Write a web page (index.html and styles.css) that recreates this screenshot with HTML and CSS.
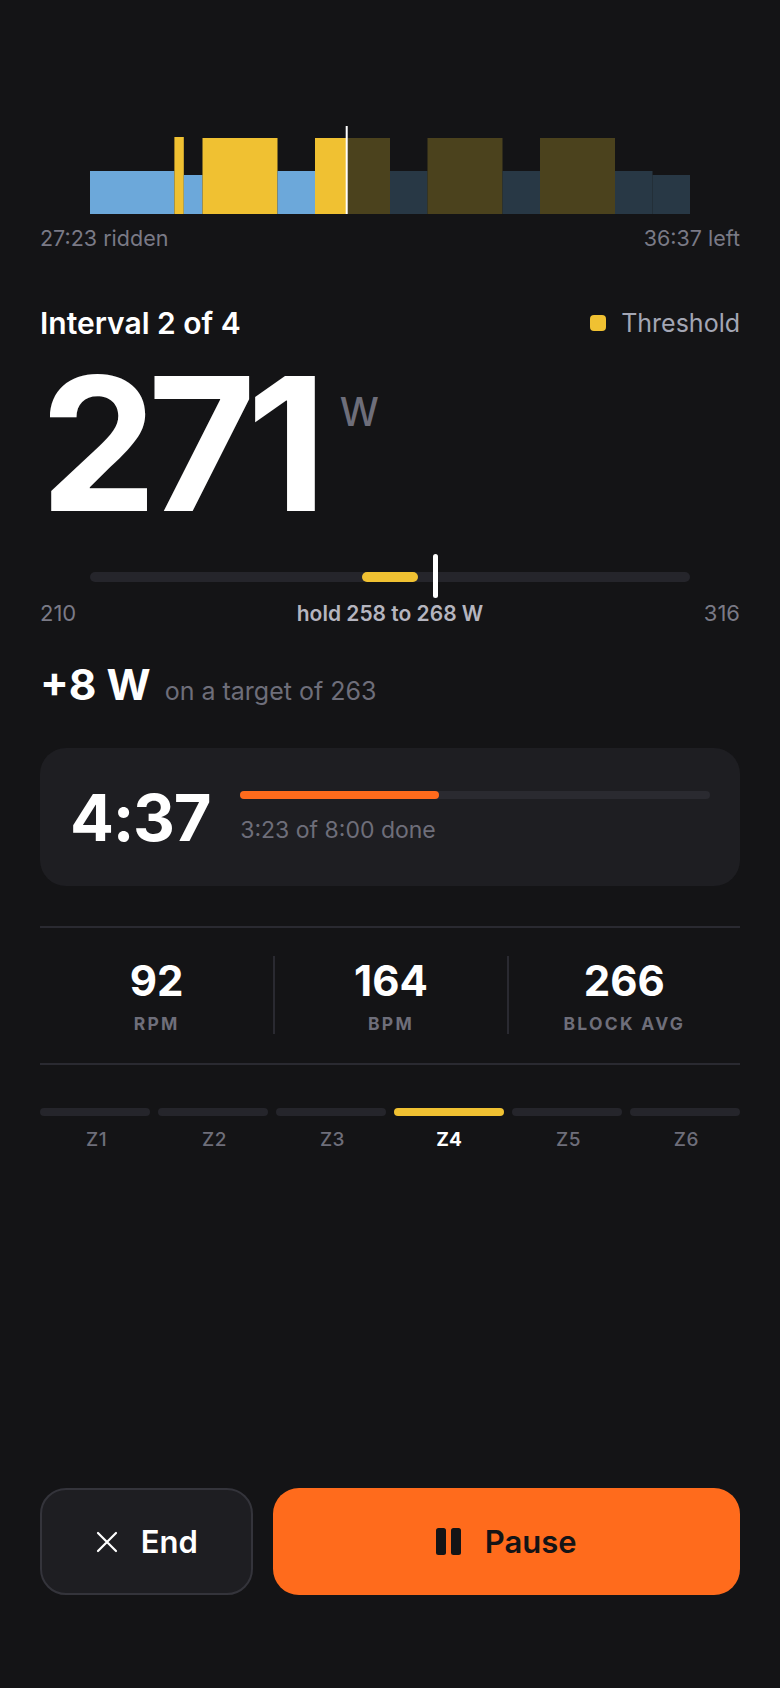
FILE: index.html
```html
<!DOCTYPE html>
<html lang="en">
<head>
    <meta charset="UTF-8">
    <meta name="viewport" content="width=device-width, initial-scale=1.0">
    <title>Ride - Interval 2 of 4</title>
    <link rel="stylesheet" href="styles.css">
</head>
<body>

    <main class="ride">

        <!-- Workout profile -->
        <section class="profile">
            <svg class="profile-chart" viewBox="0 0 600 88" width="600" height="88">
                <!-- ridden -->
                <rect x="0" y="45" width="84.4" height="43" fill="#6ca8da"/>
                <rect x="84.4" y="11" width="9.4" height="77" fill="#f0c132"/>
                <rect x="93.8" y="49" width="18.7" height="39" fill="#6ca8da"/>
                <rect x="112.5" y="12" width="75" height="76" fill="#f0c132"/>
                <rect x="187.5" y="45" width="37.5" height="43" fill="#6ca8da"/>
                <rect x="225" y="12" width="31.7" height="76" fill="#f0c132"/>
                <!-- to come -->
                <rect x="256.7" y="12" width="43.3" height="76" fill="#4b421d"/>
                <rect x="300" y="45" width="37.5" height="43" fill="#283845"/>
                <rect x="337.5" y="12" width="75" height="76" fill="#4b421d"/>
                <rect x="412.5" y="45" width="37.5" height="43" fill="#283845"/>
                <rect x="450" y="12" width="75" height="76" fill="#4b421d"/>
                <rect x="525" y="45" width="37.5" height="43" fill="#283845"/>
                <rect x="562.5" y="49" width="37.5" height="39" fill="#283845"/>
                <rect x="255.7" y="0" width="2" height="88" fill="#ffffff"/>
            </svg>
            <div class="profile-times">
                <span>27:23 ridden</span>
                <span>36:37 left</span>
            </div>
        </section>

        <!-- Current interval -->
        <section class="interval">
            <div class="interval-head">
                <h1>Interval 2 of 4</h1>
                <span class="zone-tag"><i class="swatch"></i>Threshold</span>
            </div>

            <div class="power">
                <span class="power-value">271</span>
                <span class="power-unit">W</span>
            </div>

            <div class="range">
                <div class="range-track">
                    <div class="range-band" style="left: 45.3%; width: 9.4%;"></div>
                    <div class="range-marker" style="left: 57.5%;"></div>
                </div>
                <div class="range-labels">
                    <span>210</span>
                    <strong>hold 258 to 268 W</strong>
                    <span>316</span>
                </div>
            </div>

            <div class="delta">
                <strong>+8 W</strong>
                <span>on a target of 263</span>
            </div>
        </section>

        <!-- Time left in block -->
        <section class="block-card">
            <div class="block-time">4:37</div>
            <div class="block-progress">
                <div class="progress-track">
                    <div class="progress-fill" style="width: 42.3%;"></div>
                </div>
                <p>3:23 of 8:00 done</p>
            </div>
        </section>

        <!-- Live stats -->
        <section class="stats">
            <div class="stat">
                <div class="stat-value">92</div>
                <div class="stat-label">RPM</div>
            </div>
            <div class="stat">
                <div class="stat-value">164</div>
                <div class="stat-label">BPM</div>
            </div>
            <div class="stat">
                <div class="stat-value">266</div>
                <div class="stat-label">BLOCK AVG</div>
            </div>
        </section>

        <!-- Power zones -->
        <section class="zones">
            <div class="zone"><div class="zone-bar"></div><span>Z1</span></div>
            <div class="zone"><div class="zone-bar"></div><span>Z2</span></div>
            <div class="zone"><div class="zone-bar"></div><span>Z3</span></div>
            <div class="zone active"><div class="zone-bar"></div><span>Z4</span></div>
            <div class="zone"><div class="zone-bar"></div><span>Z5</span></div>
            <div class="zone"><div class="zone-bar"></div><span>Z6</span></div>
        </section>

        <div class="spacer"></div>

        <!-- Controls -->
        <footer class="controls">
            <button class="btn btn-end">
                <svg width="24" height="24" viewBox="0 0 24 24">
                    <path d="M3 3 L21 21 M21 3 L3 21" stroke="#fff" stroke-width="2.2" stroke-linecap="round"/>
                </svg>
                End
            </button>
            <button class="btn btn-pause">
                <svg width="25" height="27" viewBox="0 0 25 27">
                    <rect x="0" y="0" width="10" height="27" rx="2.5" fill="#141416"/>
                    <rect x="15" y="0" width="10" height="27" rx="2.5" fill="#141416"/>
                </svg>
                Pause
            </button>
        </footer>

    </main>

</body>
</html>
```

FILE: styles.css
```css
* {
    margin: 0;
    padding: 0;
    box-sizing: border-box;
}

body {
    font-family: Inter, "Noto Sans", sans-serif;
    background-color: #141416;
    color: #fff;
}

.ride {
    min-height: 100vh;
    display: flex;
    flex-direction: column;
    padding: 126px 40px 93px;
}

/* Profile */
.profile-chart {
    display: block;
    margin: 0 auto;
}

.profile-times {
    display: flex;
    justify-content: space-between;
    margin-top: 12px;
    font-size: 21.5px;
    line-height: 24px;
    color: #7a7a86;
}

/* Interval */
.interval-head {
    display: flex;
    justify-content: space-between;
    align-items: center;
    margin-top: 58px;
    height: 30px;
}

.interval-head h1 {
    font-size: 30px;
    font-weight: 600;
}

.zone-tag {
    display: flex;
    align-items: center;
    gap: 15px;
    font-size: 25px;
    color: #a3a6b4;
}

.swatch {
    width: 16px;
    height: 16px;
    border-radius: 4px;
    background-color: #f0c132;
}

.power {
    display: flex;
    align-items: flex-start;
    margin-top: 13px;
}

.power-value {
    font-size: 186px;
    line-height: 1;
    font-weight: 700;
    letter-spacing: -0.05em;
}

.power-unit {
    font-size: 39px;
    line-height: 1;
    font-weight: 500;
    color: #6e6e7a;
    margin-top: 41px;
    margin-left: 22px;
}

.range {
    margin-top: 35px;
}

.range-track {
    position: relative;
    height: 10px;
    margin: 0 50px;
    border-radius: 5px;
    background-color: #25252b;
}

.range-band {
    position: absolute;
    top: 0;
    height: 10px;
    border-radius: 5px;
    background-color: #f0c132;
}

.range-marker {
    position: absolute;
    top: -18px;
    width: 5px;
    height: 44px;
    margin-left: -2px;
    border-radius: 3px;
    background-color: #fff;
}

.range-labels {
    display: flex;
    justify-content: space-between;
    align-items: baseline;
    margin-top: 19px;
    font-size: 22px;
    line-height: 24px;
    color: #7a7a86;
}

.range-labels strong {
    font-size: 21px;
    font-weight: 600;
    color: #b5b5bf;
}

.delta {
    display: flex;
    align-items: baseline;
    gap: 14px;
    margin-top: 36px;
}

.delta strong {
    font-size: 42.5px;
    line-height: 46px;
    font-weight: 700;
}

.delta span {
    font-size: 25px;
    color: #6e6e7a;
}

/* Block card */
.block-card {
    display: flex;
    align-items: center;
    gap: 30px;
    margin-top: 40px;
    padding: 36.5px 30px;
    border-radius: 26px;
    background-color: #1e1e22;
}

.block-time {
    font-size: 65px;
    line-height: 1;
    font-weight: 700;
    letter-spacing: -0.02em;
}

.block-progress {
    flex: 1;
}

.progress-track {
    height: 8px;
    border-radius: 4px;
    background-color: #2a2a30;
}

.progress-fill {
    height: 8px;
    border-radius: 4px;
    background-color: #ff6b1c;
}

.block-progress p {
    margin-top: 17px;
    font-size: 23px;
    line-height: 28px;
    color: #6e6e7a;
}

/* Stats */
.stats {
    display: grid;
    grid-template-columns: repeat(3, 1fr);
    margin-top: 40px;
    padding: 28px 0 29px;
    border-top: 2px solid #2a2a31;
    border-bottom: 2px solid #2a2a31;
}

.stat {
    text-align: center;
    padding-top: 4px;
}

.stat + .stat {
    border-left: 2px solid #2a2a31;
}

.stat-value {
    font-size: 42px;
    line-height: 1;
    font-weight: 700;
}

.stat-label {
    margin-top: 12px;
    font-size: 17.5px;
    line-height: 20px;
    font-weight: 700;
    letter-spacing: 0.13em;
    color: #6e6e7a;
}

/* Zones */
.zones {
    display: grid;
    grid-template-columns: repeat(6, 1fr);
    gap: 8px;
    margin-top: 43px;
}

.zone {
    text-align: center;
}

.zone-bar {
    height: 8px;
    border-radius: 4px;
    background-color: #25252b;
}

.zone span {
    display: block;
    margin-top: 13px;
    padding-left: 3px;
    font-size: 19px;
    line-height: 22px;
    font-weight: 500;
    letter-spacing: 0.03em;
    color: #6e6e7a;
}

.zone.active .zone-bar {
    background-color: #f0c132;
}

.zone.active span {
    padding-left: 0;
    letter-spacing: 0;
    color: #fff;
    font-weight: 700;
}

.spacer {
    flex: 1;
}

/* Controls */
.controls {
    display: grid;
    grid-template-columns: 1fr 2.2fr;
    gap: 20px;
}

.btn {
    display: flex;
    align-items: center;
    justify-content: center;
    gap: 22px;
    height: 107px;
    border-radius: 26px;
    font-family: Inter, "Noto Sans", sans-serif;
    font-size: 31px;
    font-weight: 600;
    cursor: pointer;
}

.btn-end {
    background-color: #1e1e22;
    border: 2px solid #34343b;
    color: #fff;
}

.btn-pause {
    gap: 24px;
    background-color: #ff6b1c;
    border: none;
    color: #141416;
}
```
